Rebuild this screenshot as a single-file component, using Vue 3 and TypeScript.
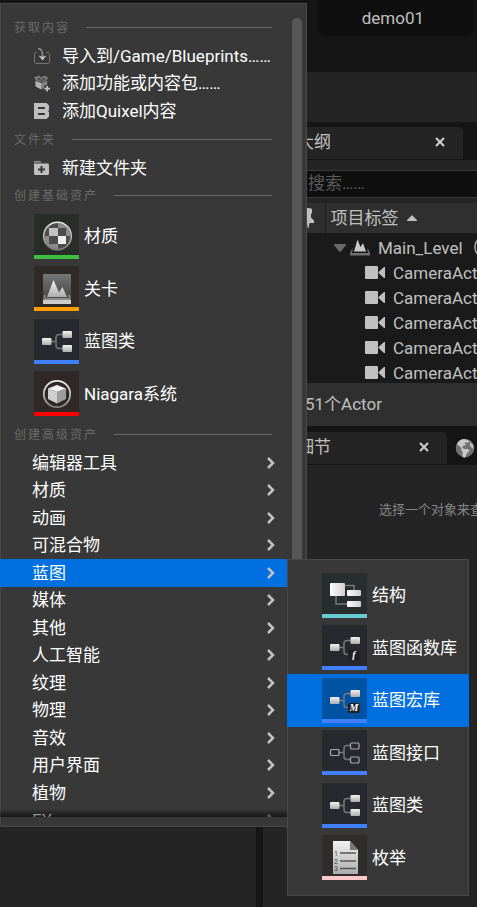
<script setup lang="ts">
import { ref } from 'vue'

interface AssetEntry {
  label: string
  icon: string
  tone: string
}

const contentActions = [
  { label: '导入到/Game/Blueprints……', icon: 'import' },
  { label: '添加功能或内容包……', icon: 'pack' },
  { label: '添加Quixel内容', icon: 'quixel' },
]

const basicAssets: AssetEntry[] = [
  { label: '材质', icon: 'material', tone: 'green' },
  { label: '关卡', icon: 'level', tone: 'orange' },
  { label: '蓝图类', icon: 'blueprint', tone: 'blue' },
  { label: 'Niagara系统', icon: 'niagara', tone: 'red' },
]

const advancedGroups = [
  '编辑器工具', '材质', '动画', '可混合物', '蓝图', '媒体', '其他',
  '人工智能', '纹理', '物理', '音效', '用户界面', '植物', 'FX',
]

const blueprintAssets: AssetEntry[] = [
  { label: '结构', icon: 'struct', tone: 'cyan' },
  { label: '蓝图函数库', icon: 'function', tone: 'blue' },
  { label: '蓝图宏库', icon: 'macro', tone: 'blue' },
  { label: '蓝图接口', icon: 'interface', tone: 'blue' },
  { label: '蓝图类', icon: 'blueprint', tone: 'blue' },
  { label: '枚举', icon: 'enum', tone: 'pink' },
]

const actors = ['CameraActor', 'CameraActor2', 'CameraActor3', 'CameraActor4', 'CameraActor5']

const openGroup = ref('蓝图')
const activeAsset = ref('蓝图宏库')
const search = ref('')
</script>

<template>
  <div class="editor">
    <svg class="defs" width="0" height="0" aria-hidden="true">
      <defs>
        <linearGradient id="metal" x1="0" y1="0" x2="0" y2="1">
          <stop offset="0" stop-color="#f2f2f2" />
          <stop offset="1" stop-color="#adadad" />
        </linearGradient>
        <linearGradient id="plate" x1="0" y1="0" x2="0" y2="1">
          <stop offset="0" stop-color="#767676" />
          <stop offset="1" stop-color="#3c3c3c" />
        </linearGradient>
        <linearGradient id="ring" x1="0" y1="0" x2="0" y2="1">
          <stop offset="0" stop-color="#eeeeee" />
          <stop offset="1" stop-color="#858585" />
        </linearGradient>
        <linearGradient id="sheen" x1="0" y1="0" x2="1" y2="0">
          <stop offset="0" stop-color="#ffffff" />
          <stop offset="1" stop-color="#cfcfcf" />
        </linearGradient>
        <clipPath id="ball"><circle cx="23.5" cy="22" r="13" /></clipPath>
      </defs>
    </svg>

    <header class="titlebar">
      <button class="project">demo01</button>
    </header>
    <div class="toolbar"></div>

    <div class="workspace">
      <section class="browser"></section>
      <div class="side">
        <section class="outliner">
          <div class="tabs">
            <div class="tab tab-wide">
              <span>大纲</span>
              <button class="close" aria-label="关闭大纲">
                <svg width="10" height="10" viewBox="0 0 10 10"><path d="M1 1l8 8M9 1l-8 8" /></svg>
              </button>
            </div>
          </div>
          <div class="searchbar">
            <input v-model="search" type="text" placeholder="搜索……" aria-label="搜索" />
          </div>
          <div class="tree">
            <table>
              <thead>
                <tr>
                  <th class="pin-col" scope="col" aria-label="固定">
                    <svg width="16" height="22" viewBox="0 0 16 22">
                      <path d="M4 2q4-2 8 0v4l-1 1v3.500l3 3V16H9.500L8.700 21h-1L7 16H2v-2.500l3-3V7L4 6z" fill="#c0c0c0" />
                    </svg>
                  </th>
                  <th class="label-col" scope="col">
                    <button class="sort">
                      项目标签
                      <svg width="10" height="6" viewBox="0 0 10 6"><path d="M0 6V5.200L5 0l5 5.200V6z" fill="#c0c0c0" /></svg>
                    </button>
                  </th>
                </tr>
              </thead>
              <tbody>
                <tr class="level-row">
                  <td></td>
                  <td>
                    <div class="node">
                      <svg width="12" height="8" viewBox="0 0 12 8"><path d="M0 0h12v1L7 7.500H5L0 1z" fill="#6a6a6a" /></svg>
                      <svg class="level-icon" width="20" height="17" viewBox="0 0 20 17">
                        <path d="M4 12.500L7.500 0.500l3 7.500L13 4l3 8.500z" fill="#c8c8c8" />
                        <path d="M2.500 9L0 14v2.500h20V14l-2.500-5v3.500l1 1.500H1.500l1-1.500z" fill="#707070" />
                      </svg>
                      <span>Main_Level（编辑器）</span>
                    </div>
                  </td>
                </tr>
                <tr v-for="actor in actors" :key="actor">
                  <td></td>
                  <td>
                    <div class="node node-child">
                      <svg width="20" height="13" viewBox="0 0 20 13">
                        <rect width="13" height="13" rx="1" fill="#c0c0c0" />
                        <path d="M20 1v11h-1l-5.500-5v-1L19 1z" fill="#c0c0c0" />
                      </svg>
                      <span>{{ actor }}</span>
                    </div>
                  </td>
                </tr>
              </tbody>
            </table>
          </div>
          <footer class="status">51个Actor</footer>
        </section>

        <section class="details">
          <div class="tabs">
            <div class="tab tab-narrow">
              <span>细节</span>
              <button class="close" aria-label="关闭细节">
                <svg width="10" height="10" viewBox="0 0 10 10"><path d="M1 1l8 8M9 1l-8 8" /></svg>
              </button>
            </div>
            <button class="world" aria-label="世界场景设置">
              <svg width="20" height="20" viewBox="0 0 20 20">
                <circle cx="10" cy="10" r="9.300" fill="#707070" />
                <path d="M2 6Q4 1.500 9 1l3 1 2.500 1-1.500 2-2-1-1.500 1.500 2 1.500-3 .5-1.500 2 2 1.500h4l1.500 2-3 2.500-1 3.500-1.500 1-1.500-2V14L6.500 12 6 9.500z" fill="#c8c8c8" />
                <path d="M15 4l3 3 .5 4-2-1.500-1.500-2z" fill="#c0c0c0" />
              </svg>
            </button>
          </div>
          <p class="hint">选择一个对象来查看细节。</p>
        </section>
      </div>
    </div>

    <nav class="menu" aria-label="内容浏览器菜单">
      <div class="menu-scroll">
        <h2 class="heading">获取内容</h2>
        <div class="rows rows-content">
          <button v-for="action in contentActions" :key="action.label" class="row row-icon">
            <svg v-if="action.icon === 'import'" width="16" height="16" viewBox="0 0 16 16">
              <path d="M3 4.500H1.500L.5 5.500v9l1 1h13l1-1v-9l-1-1H12" fill="none" stroke="#757575" />
              <path d="M4 .5c3 .3 4.500 2.500 4.500 6V9" fill="none" stroke="#8c8c8c" stroke-width="1.600" />
              <path d="M4.500 7.500l3 1h2l3-1-4 5z" fill="#c0c0c0" />
            </svg>
            <svg v-else-if="action.icon === 'pack'" width="16" height="17" viewBox="0 0 17 17">
              <path d="M0 2l5-2 3 2 3-2 4 2-1.500 3L8 7 2 5z" fill="#7c7c7c" />
              <path d="M3 3.500l3-1 2 2.500 2-3 3 1.500-5 2.500z" fill="#4a4a4a" />
              <path d="M1.500 5.500l6 2.500v7l-6-3.500z" fill="#b4b4b4" />
              <path d="M7.500 8L14 5.500v4l-3 1-.5 3L7.500 15z" fill="#858585" />
              <path d="M14 11v6M11 14h6" stroke="#c0c0c0" stroke-width="1.800" />
            </svg>
            <svg v-else width="16" height="16" viewBox="0 0 16 16">
              <path fill-rule="evenodd" d="M0 0h12.500L15 2.500v4.200L14.200 8l.8 1.300v4.200L12.500 16H0zM4 4v2h7V4zM4 10v2h7v-2z" fill="#bebebe" />
            </svg>
            <span>{{ action.label }}</span>
          </button>
        </div>

        <h2 class="heading">文件夹</h2>
        <div class="rows rows-folder">
          <button class="row row-icon">
            <svg width="16" height="16" viewBox="0 0 16 16">
              <path d="M0 1h6l2 1.500H0z" fill="#929292" />
              <path d="M0 3.500h14l1 1V14l-1 1H1l-1-1z" fill="#bebebe" />
              <path d="M7.500 6v7M4 9.500h7" stroke="#383838" stroke-width="2" />
            </svg>
            <span>新建文件夹</span>
          </button>
        </div>

        <h2 class="heading">创建基础资产</h2>
        <div class="rows rows-basic">
          <button v-for="asset in basicAssets" :key="asset.label" class="row row-asset">
            <span class="tile" :class="'tile-' + asset.tone">
              <svg v-if="asset.icon === 'material'" width="45" height="41" viewBox="0 0 45 41">
                <g clip-path="url(#ball)">
                  <rect x="9" y="8" width="29" height="29" fill="#8c8c8c" />
                  <path d="M15 8h9v6h-9zM24 14h8v8h-8zM15 22h9v8h-9zM24 30h9v7h-9zM9 14h6v8H9zM32 22h6v8h-6z" fill="#4c4c4c" />
                  <path d="M15 14h9v8h-9z" fill="#c2c2c2" />
                  <path d="M24 22h8v8h-8z" fill="#eeeeee" />
                </g>
                <circle cx="23.500" cy="22" r="13.800" fill="none" stroke="url(#ring)" stroke-width="1.500" />
              </svg>
              <svg v-else-if="asset.icon === 'level'" width="45" height="41" viewBox="0 0 45 41">
                <rect x="9" y="8" width="28" height="29" fill="url(#plate)" />
                <path d="M13 31l6.500-17 5.500 12.500L28.500 21 33 31z" fill="url(#metal)" />
                <path d="M9.500 32.500L11 29v3.500h24V29l1.500 3.500" fill="none" stroke="#b0b0b0" stroke-width=".7" />
                <rect x="9" y="33.500" width="28" height="4.500" fill="#cccccc" />
              </svg>
              <svg v-else-if="asset.icon === 'blueprint'" width="45" height="41" viewBox="0 0 45 41">
                <path d="M17 22.500h5M29 15.500h-4q-3 0-3 3v8q0 3 3 3h4" fill="none" stroke="#777777" stroke-width="1.500" />
                <rect x="8" y="19" width="9.500" height="7" rx="1" fill="url(#metal)" />
                <rect x="28.500" y="12" width="9.500" height="7" rx="1" fill="url(#metal)" />
                <rect x="28.500" y="26" width="9.500" height="7" rx="1" fill="url(#metal)" />
              </svg>
              <svg v-else width="45" height="41" viewBox="0 0 45 41">
                <circle cx="23" cy="23" r="13.200" fill="none" stroke="url(#ring)" stroke-width="1.800" />
                <path d="M14 17.500l9-3.500 9 3.500-9 3.500z" fill="#f2f2f2" />
                <path d="M14 17.500l9 3.500v11.500l-9-4.500z" fill="#cfcfcf" />
                <path d="M32 17.500L23 21v11.500l9-4.500z" fill="#9d9d9d" />
              </svg>
            </span>
            <span>{{ asset.label }}</span>
          </button>
        </div>

        <h2 class="heading">创建高级资产</h2>
        <div class="rows rows-advanced">
          <button
            v-for="group in advancedGroups"
            :key="group"
            class="row row-group"
            :class="{ selected: group === openGroup }"
            @mouseenter="openGroup = group"
          >
            <span>{{ group }}</span>
            <svg width="10" height="14" viewBox="0 0 10 14"><path d="M2 2l5 5-5 5" fill="none" stroke="#c2c2c2" stroke-width="2.500" /></svg>
          </button>
        </div>
        <div class="fade"></div>
      </div>
      <div class="scrollbar"><div class="thumb"></div></div>
    </nav>

    <nav class="submenu" aria-label="蓝图">
      <div class="rows rows-blueprint">
        <button
          v-for="asset in blueprintAssets"
          :key="asset.label"
          class="row row-asset"
          :class="{ selected: asset.label === activeAsset }"
          @mouseenter="activeAsset = asset.label"
        >
          <span class="tile" :class="'tile-' + asset.tone">
            <svg v-if="asset.icon === 'struct'" width="45" height="41" viewBox="0 0 45 41">
              <path d="M23 12.500h9V17M14 23v8h11" fill="none" stroke="#777777" stroke-width="1.500" />
              <rect x="8" y="10" width="15" height="13" rx="1" fill="url(#sheen)" />
              <rect x="25" y="17" width="14" height="6" rx="1" fill="url(#sheen)" />
              <rect x="25" y="28" width="14" height="6" rx="1" fill="url(#sheen)" />
            </svg>
            <svg v-else-if="asset.icon === 'enum'" width="45" height="41" viewBox="0 0 45 41">
              <path d="M11 6h17l8 9v24H11z" fill="url(#metal)" />
              <path d="M28 6v9h8z" fill="#777777" />
              <path d="M18 18h16M18 26h16M18 33.500h16" stroke="#555555" stroke-width="1.300" />
              <g class="digits"><text x="12" y="20.500">1</text><text x="12" y="28.500">2</text><text x="12" y="36">3</text></g>
            </svg>
            <svg v-else width="45" height="41" viewBox="0 0 45 41">
              <path d="M17 22.500h5M29 15.500h-4q-3 0-3 3v8q0 3 3 3h4" fill="none" stroke="#777777" stroke-width="1.500" />
              <template v-if="asset.icon === 'interface'">
                <g fill="#28292f" stroke="#aaaaaa" stroke-width="1.200">
                  <rect x="8.500" y="19.500" width="8.500" height="6" rx="1" />
                  <rect x="28.500" y="13" width="8.500" height="6" rx="1" />
                  <rect x="28.500" y="27" width="8.500" height="6" rx="1" />
                </g>
              </template>
              <template v-else>
                <rect x="8" y="19" width="9.500" height="7" rx="1" fill="url(#metal)" />
                <rect x="28.500" y="12" width="9.500" height="7" rx="1" fill="url(#metal)" />
                <rect v-if="asset.icon === 'blueprint'" x="28.500" y="26" width="9.500" height="7" rx="1" fill="url(#metal)" />
                <template v-else>
                  <rect x="26" y="25" width="11.500" height="10" rx="2" fill="#202020" />
                  <text class="badge" x="32" y="33">{{ asset.icon === 'macro' ? 'M' : 'f' }}</text>
                </template>
              </template>
            </svg>
          </span>
          <span>{{ asset.label }}</span>
        </button>
      </div>
    </nav>
  </div>
</template>

<style>
body {
  background: #151515;
}
</style>

<style scoped>
.editor {
  position: relative;
  display: flex;
  flex-direction: column;
  min-height: 100vh;
  overflow: hidden;
  background: #151515;
  color: #c0c0c0;
  font: 17px/24px Roboto, "Noto Sans CJK SC", sans-serif;
}
.defs {
  position: absolute;
}
button {
  margin: 0;
  padding: 0;
  border: 0;
  background: none;
  color: inherit;
  font: inherit;
  text-align: left;
}
svg {
  display: block;
  flex: none;
}

.titlebar {
  display: flex;
  justify-content: flex-end;
  height: 72px;
  padding-right: 3px;
}
.project {
  height: 36px;
  padding: 0 50px 0 44px;
  border-radius: 0 0 7px 7px;
  background: #0f0f0f;
}
.toolbar {
  height: 50px;
  background: #242424;
}
.workspace {
  flex: 1;
  display: grid;
  grid-template-columns: 256px minmax(0, 1fr);
  column-gap: 7px;
}
.browser {
  background: #242424;
}
.side {
  display: flex;
  flex-direction: column;
  min-width: 0;
}
.tabs {
  display: flex;
  align-items: center;
  height: 38px;
  padding-top: 5px;
  box-sizing: border-box;
  border-bottom: 1px solid #151515;
}
.tab {
  display: flex;
  align-items: center;
  justify-content: space-between;
  height: 32px;
  padding: 0 18px 2px 34px;
  box-sizing: border-box;
  border-radius: 0 5px 0 0;
  background: #242424;
}
.tab-wide {
  width: 200px;
}
.tab-narrow {
  width: 184px;
}
.close path {
  stroke: #d0d0d0;
  stroke-width: 2;
}
.world {
  margin-left: 8px;
}
.searchbar {
  padding: 10px 0 5px;
  background: #242424;
}
input {
  display: block;
  width: 100%;
  height: 28px;
  padding: 0 0 2px 45px;
  box-sizing: border-box;
  border: 1px solid #383838;
  border-width: 1px 0;
  outline: 0;
  background: #0f0f0f;
  color: #c0c0c0;
  font: inherit;
}
input::placeholder {
  color: #5a5a5a;
  opacity: 1;
}
.tree {
  height: 180px;
  overflow: hidden;
  background: #1a1a1a;
}
table {
  width: 100%;
  table-layout: fixed;
  border-collapse: collapse;
}
th {
  height: 30px;
  padding: 0;
  background: #2f2f2f;
  font-weight: 400;
}
.pin-col {
  width: 62px;
  box-sizing: border-box;
  padding-left: 37px;
  border-right: 1px solid #1a1a1a;
}
.sort {
  display: flex;
  align-items: center;
  gap: 8px;
  padding-left: 5px;
}
td {
  height: 25px;
  padding: 0;
}
.level-row td {
  padding-top: 2px;
}
.node {
  display: flex;
  align-items: center;
  padding-left: 9px;
  white-space: nowrap;
}
.level-icon {
  margin: 0 8px 0 4px;
}
.node-child {
  gap: 8px;
  padding-left: 40px;
}
.status {
  height: 43px;
  padding-left: 42px;
  background: #2f2f2f;
  line-height: 43px;
}
.details {
  flex: 1;
  background: #242424;
}
.details .tabs {
  height: 39px;
  padding-top: 6px;
  background: #151515;
}
.hint {
  margin: 0;
  padding: 33px 0 0 116px;
  overflow: hidden;
  color: #858585;
  font-size: 13px;
  white-space: nowrap;
}

.menu,
.submenu {
  position: absolute;
  background: #383838;
  box-shadow: inset 0 0 0 1px #484848;
  color: #fff;
}
.menu {
  top: 3px;
  bottom: 80px;
  left: 0;
  display: flex;
  width: 307px;
  padding: 10px 0;
  box-sizing: border-box;
}
.menu-scroll {
  position: relative;
  width: 287px;
  overflow: hidden;
}
.scrollbar {
  flex: 1;
  padding: 5px 5px 0;
}
.thumb {
  height: 100%;
  border-radius: 5px;
  background: #575757;
}
.heading {
  display: flex;
  align-items: center;
  gap: 16px;
  height: 29px;
  margin: 0;
  padding: 0 15px 0 14px;
  color: #6a6a6a;
  font-size: 12px;
  font-weight: 400;
  letter-spacing: 2px;
}
.heading::after {
  content: "";
  flex: 1;
  height: 1px;
  background: #6a6a6a;
}
.rows {
  display: grid;
  grid-auto-rows: 1fr;
}
.rows-content {
  height: 83px;
}
.rows-folder {
  height: 27px;
}
.rows-basic {
  height: 210px;
}
.rows-advanced {
  height: 385px;
}
.rows-blueprint {
  height: 315px;
}
.row {
  display: flex;
  align-items: center;
  min-height: 0;
  padding-left: 34px;
  white-space: nowrap;
}
.row-icon svg {
  width: 16px;
  margin-right: 12px;
  overflow: visible;
}
.row-asset {
  gap: 5px;
}
.submenu .row {
  padding-left: 35px;
}
.row-group {
  justify-content: space-between;
  padding: 0 11px 0 32px;
}
.selected {
  background: #0070e0;
}
.tile {
  width: 45px;
  height: 45px;
  box-sizing: border-box;
  border-bottom: 4px solid;
}
.tile-green {
  border-color: #40c040;
  background: #282d29;
}
.tile-orange {
  border-color: #ff9c00;
  background: #302a27;
}
.tile-blue {
  border-color: #4080ff;
  background: #28292f;
}
.tile-red {
  border-color: #ff0000;
  background: #302727;
}
.tile-cyan {
  border-color: #68ccd8;
  background: #282d2d;
}
.tile-pink {
  border-color: #ffc8c8;
  background: #302c2c;
}
.selected .tile {
  background: #0052a3;
}
.digits {
  fill: #444;
  font: 7px Roboto, sans-serif;
}
.badge {
  fill: #fff;
  font: italic bold 10px "Liberation Serif", serif;
  text-anchor: middle;
}
.fade {
  position: absolute;
  right: 0;
  bottom: 0;
  left: 0;
  height: 8px;
  background: linear-gradient(transparent, rgba(0, 0, 0, 0.6));
  pointer-events: none;
}
.submenu {
  top: 559px;
  left: 287px;
  width: 182px;
  padding: 10px 0 12px;
  box-sizing: border-box;
}
</style>
